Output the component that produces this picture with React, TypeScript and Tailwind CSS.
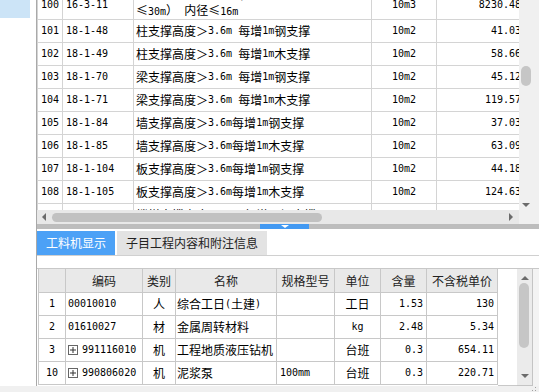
import React from "react";

const asciiFont = "font-['DejaVu_Sans_Mono',monospace] text-[10px]";

// SimSun-like rendering: half-width runs in a narrow mono, CJK in Noto
function Mix({ s }: { s: string }) {
  const parts = s.split(/([\x20-\x7e]+)/).filter(Boolean);
  return (
    <>
      {parts.map((p, i) =>
        /^[\x20-\x7e]+$/.test(p) ? (
          <span key={i} className={`${asciiFont} whitespace-pre`}>
            {p}
          </span>
        ) : (
          <span key={i}>{p}</span>
        )
      )}
    </>
  );
}

type TopRow = { no: string; code: string; name: string; unit: string; amount: string };

const topRows: TopRow[] = [
  { no: "101", code: "18-1-48", name: "柱支撑高度＞3.6m 每增1m钢支撑", unit: "10m2", amount: "41.03" },
  { no: "102", code: "18-1-49", name: "柱支撑高度＞3.6m 每增1m木支撑", unit: "10m2", amount: "58.66" },
  { no: "103", code: "18-1-70", name: "梁支撑高度＞3.6m 每增1m钢支撑", unit: "10m2", amount: "45.12" },
  { no: "104", code: "18-1-71", name: "梁支撑高度＞3.6m 每增1m木支撑", unit: "10m2", amount: "119.57" },
  { no: "105", code: "18-1-84", name: "墙支撑高度＞3.6m每增1m钢支撑", unit: "10m2", amount: "37.03" },
  { no: "106", code: "18-1-85", name: "墙支撑高度＞3.6m每增1m木支撑", unit: "10m2", amount: "63.09" },
  { no: "107", code: "18-1-104", name: "板支撑高度＞3.6m每增1m钢支撑", unit: "10m2", amount: "44.18" },
  { no: "108", code: "18-1-105", name: "板支撑高度＞3.6m每增1m木支撑", unit: "10m2", amount: "124.63" },
  { no: "109", code: "18-1-106", name: "楼梯支撑高度＞3.6m每增1m钢支撑", unit: "10m2", amount: "52.47" },
];

type Res = { no: string; code: string; expand?: boolean; kind: string; name: string; spec: string; unit: string; qty: string; price: string };

const resRows: Res[] = [
  { no: "1", code: "00010010", kind: "人", name: "综合工日(土建)", spec: "", unit: "工日", qty: "1.53", price: "130" },
  { no: "2", code: "01610027", kind: "材", name: "金属周转材料", spec: "", unit: "kg", qty: "2.48", price: "5.34" },
  { no: "3", code: "991116010", expand: true, kind: "机", name: "工程地质液压钻机", spec: "", unit: "台班", qty: "0.3", price: "654.11" },
  { no: "10", code: "990806020", expand: true, kind: "机", name: "泥浆泵", spec: "100mm", unit: "台班", qty: "0.3", price: "220.71" },
];

const topGrid = "grid grid-cols-[26px_71px_238px_65px_88px]";
const topCell = "flex items-center overflow-hidden whitespace-nowrap border-b border-r border-[#d4d4d4] leading-[14px]";
const lowGrid = "grid grid-cols-[28px_77px_33px_101px_58px_46px_46px_71px]";
const lowCell = "flex items-center overflow-hidden whitespace-nowrap border-b border-r border-[#c8c8c8] leading-[14px]";

function Arrow({ dir }: { dir: "up" | "down" | "left" | "right" }) {
  const pts = {
    up: "0,5 4,1 8,5",
    down: "0,1 8,1 4,5",
    left: "5,0 5,8 1,4",
    right: "1,0 1,8 5,4",
  }[dir];
  const vertical = dir === "up" || dir === "down";
  return (
    <svg width={vertical ? 8 : 6} height={vertical ? 6 : 8} viewBox={vertical ? "0 0 8 6" : "0 0 6 8"}>
      <polygon points={pts} fill="#6b6b6b" />
    </svg>
  );
}

function TopTable() {
  return (
    <div className="h-[210px] overflow-hidden text-black">
      {/* row 100 sits partly above the view */}
      <div className={`${topGrid} -mt-[9px] h-[29px]`}>
        <div className={`${topCell} justify-center border-l`}><Mix s="100" /></div>
        <div className={`${topCell} pl-[3px]`}><Mix s="16-3-11" /></div>
        <div className={`${topCell} flex-col !items-start justify-center pb-[4px] pl-[2px]`}>
          <div className="shrink-0"><Mix s="钢护筒埋设 成孔桩(孔深" /></div>
          <div className="shrink-0"><Mix s="≤30m） 内径≤16m" /></div>
        </div>
        <div className={`${topCell} justify-center`}><Mix s="10m3" /></div>
        <div className={`${topCell} justify-end pr-[3px]`}><Mix s="8230.48" /></div>
      </div>
      {topRows.map((r) => (
        <div key={r.no} className={`${topGrid} h-[23px]`}>
          <div className={`${topCell} justify-center border-l`}><Mix s={r.no} /></div>
          <div className={`${topCell} pl-[3px]`}><Mix s={r.code} /></div>
          <div className={`${topCell} pl-[2px]`}><Mix s={r.name} /></div>
          <div className={`${topCell} justify-center`}><Mix s={r.unit} /></div>
          <div className={`${topCell} justify-end pr-[3px]`}><Mix s={r.amount} /></div>
        </div>
      ))}
    </div>
  );
}

function LowerTable() {
  const heads = ["", "编码", "类别", "名称", "规格型号", "单位", "含量", "不含税单价"];
  return (
    <div className="w-[460px] shrink-0">
      <div className={`${lowGrid} h-[24px] bg-[#e9e9e9] text-[#222]`}>
        {heads.map((h, i) => (
          <div key={i} className={`${lowCell} justify-center ${i === 0 ? "border-l" : ""}`}>
            {h}
          </div>
        ))}
      </div>
      {resRows.map((r) => (
        <div key={r.no} className={`${lowGrid} h-[23px] text-black`}>
          <div className={`${lowCell} justify-center border-l`}><Mix s={r.no} /></div>
          <div className={`${lowCell} gap-[4px] pl-[2px]`}>
            {r.expand && (
              <span className="flex h-[10px] w-[10px] items-center justify-center border border-[#666]">
                <svg width="8" height="8" viewBox="0 0 8 8">
                  <path d="M1 4H7M4 1V7" stroke="#333" strokeWidth="1" />
                </svg>
              </span>
            )}
            <Mix s={r.code} />
          </div>
          <div className={`${lowCell} justify-center`}>{r.kind}</div>
          <div className={`${lowCell} pl-[1px]`}><Mix s={r.name} /></div>
          <div className={`${lowCell} pl-[3px]`}><Mix s={r.spec} /></div>
          <div className={`${lowCell} justify-center`}><Mix s={r.unit} /></div>
          <div className={`${lowCell} justify-end pr-[3px]`}><Mix s={r.qty} /></div>
          <div className={`${lowCell} justify-end pr-[3px]`}><Mix s={r.price} /></div>
        </div>
      ))}
    </div>
  );
}

export default function App() {
  return (
    <div className="flex h-[392px] w-[539px] flex-col overflow-hidden bg-white font-['Noto_Sans_CJK_SC',sans-serif] text-[12px]">
      <div className="flex h-[386px]">
        <div className="w-[37px] shrink-0 border-r border-[#a9a9a9]">
          <div className="h-[18px] w-[30px] bg-[#cce4f7]" />
        </div>

        <div className="flex min-w-0 flex-1 flex-col">
          {/* upper list */}
          <div className="flex h-[224px]">
            <div className="flex min-w-0 flex-1 flex-col">
              <TopTable />
              <div className="flex h-[14px] items-center bg-[#e8e8e8]">
                <div className="flex w-[14px] justify-center"><Arrow dir="left" /></div>
                <div className="ml-[1px] h-[9px] w-[270px] rounded-full bg-[#c1c1c1]" />
                <div className="flex-1" />
                <div className="mr-[5px] flex w-[6px] justify-center"><Arrow dir="right" /></div>
              </div>
            </div>
            <div className="flex w-[20px] flex-col bg-[#f0f0f0]">
              <div className="ml-[2px] mt-[66px] h-[20px] w-[10px] rounded-full bg-[#c6c6c6]" />
              <div className="ml-[3px] mt-[116px]"><Arrow dir="down" /></div>
            </div>
          </div>

          {/* splitter */}
          <div className="flex h-[5px] bg-[#bdbdbd] pl-[223px]">
            <div className="flex w-[49px] justify-center bg-[#4299f2]">
              <svg width="8" height="4" viewBox="0 0 8 4" className="mt-[1px]">
                <polygon points="0,0 8,0 4,3" fill="#fff" />
              </svg>
            </div>
          </div>

          {/* tabs */}
          <div className="flex h-[27px] items-end gap-[2px] border-b border-[#d0d0d0]">
            <div className="flex h-[24px] w-[78px] items-center justify-center bg-[#4ca1f6] text-white">工料机显示</div>
            <div className="flex h-[24px] w-[150px] items-center justify-center bg-[#e3e3e3] text-[#222]">子目工程内容和附注信息</div>
          </div>
          <div className="h-[12px]" />

          {/* lower resource table */}
          <div className="flex h-[118px] border-t border-[#c8c8c8] pl-[1px]">
            <LowerTable />
            <div className="flex-1 border-b border-[#c8c8c8]" />
            <div className="flex w-[16px] flex-col items-center border-b border-r border-[#c4c4c4] bg-[#ebebeb]">
              <div className="mt-[6px]"><Arrow dir="up" /></div>
              <div className="mr-[2px] mt-[2px] h-[65px] w-[10px] rounded-full bg-[#c6c6c6]" />
              <div className="mt-[25px]"><Arrow dir="down" /></div>
            </div>
            <div className="w-[6px] bg-[#f3f3f3]" />
          </div>
        </div>
      </div>
      <div className="flex h-[6px] justify-end bg-[#f0f0f0] pr-[3px] pt-[1px]">
        <div className="grid h-[4px] w-[4px] grid-cols-2 gap-[1px]">
          <span className="h-[1px] w-[1px]" />
          <span className="h-[1px] w-[1px] bg-[#a0a0a0]" />
          <span className="h-[1px] w-[1px] bg-[#a0a0a0]" />
          <span className="h-[1px] w-[1px] bg-[#a0a0a0]" />
        </div>
      </div>
    </div>
  );
}
